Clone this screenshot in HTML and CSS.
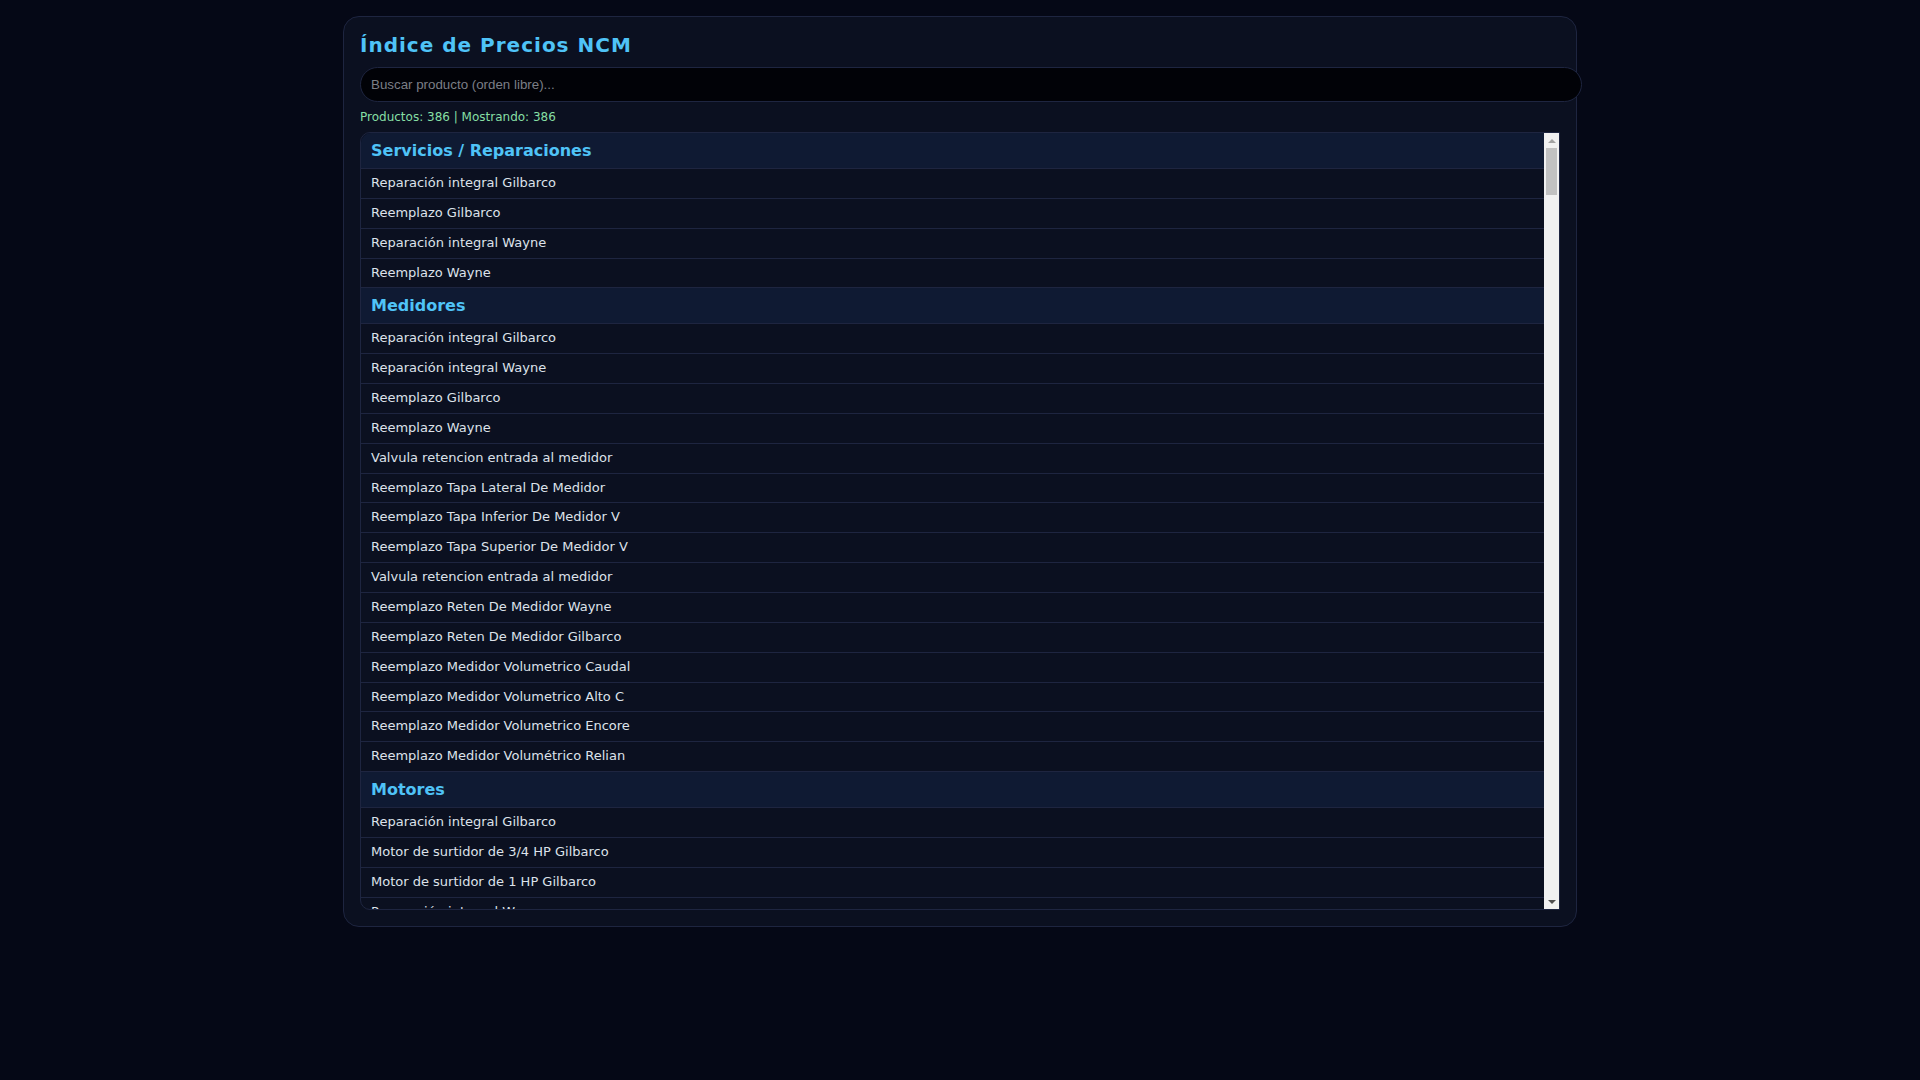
FILE: index.html
```html
<!DOCTYPE html>
<html>
<head>
    <meta charset="utf-8" />
    <meta name="viewport" content="width=device-width, initial-scale=1">
    <title>Índice de Precios NCM</title>
    <link rel="stylesheet" href="styles.css">
</head>
<body>
    <div class="panel">
        <h1>Índice de Precios NCM</h1>
        <input class="search" id="search" type="text" placeholder="Buscar producto (orden libre)..." />
        <div class="stats">Productos: <span id="total">386</span> | Mostrando: <span id="shown">386</span></div>
        <div class="list-box">
            <div class="list" id="list"></div>
            <div class="scrollbar">
                <span class="arrow up"></span>
                <div class="track" id="track"><div class="thumb" id="thumb"></div></div>
                <span class="arrow down"></span>
            </div>
        </div>
    </div>
    <script type="text/javascript">
        let data = [
            ['Servicios / Reparaciones', [
                'Reparación integral Gilbarco',
                'Reemplazo Gilbarco',
                'Reparación integral Wayne',
                'Reemplazo Wayne'
            ]],
            ['Medidores', [
                'Reparación integral Gilbarco',
                'Reparación integral Wayne',
                'Reemplazo Gilbarco',
                'Reemplazo Wayne',
                'Valvula retencion entrada al medidor',
                'Reemplazo Tapa Lateral De Medidor',
                'Reemplazo Tapa Inferior De Medidor V',
                'Reemplazo Tapa Superior De Medidor V',
                'Valvula retencion entrada al medidor',
                'Reemplazo Reten De Medidor Wayne',
                'Reemplazo Reten De Medidor Gilbarco',
                'Reemplazo Medidor Volumetrico Caudal',
                'Reemplazo Medidor Volumetrico Alto C',
                'Reemplazo Medidor Volumetrico Encore',
                'Reemplazo Medidor Volumétrico Relian'
            ]],
            ['Motores', [
                'Reparación integral Gilbarco',
                'Motor de surtidor de 3/4 HP Gilbarco',
                'Motor de surtidor de 1 HP Gilbarco',
                'Reparación integral Wayne',
                'Motor de surtidor de 3/4 HP Wayne',
                'Motor de surtidor de 1 HP Wayne'
            ]]
        ]

        // relleno del resto del catalogo
        let brands = ['Gilbarco', 'Wayne', 'Tokheim', 'Bennett']
        let extra = [
            ['Bombas', ['Reemplazo Bomba', 'Reparación Bomba', 'Reemplazo Sello Bomba', 'Reemplazo Bypass Bomba', 'Reemplazo Correa Bomba']],
            ['Mangueras', ['Manguera 3/4 x 4m', 'Manguera 1 x 4m', 'Manguera retorno vapor', 'Breakaway', 'Giratorio']],
            ['Picos', ['Pico automatico 3/4', 'Pico automatico 1', 'Pico alto caudal', 'Funda de pico', 'Reparación de pico']],
            ['Filtros', ['Filtro de linea', 'Filtro de succion', 'Reemplazo cartucho filtro', 'Filtro separador de agua']],
            ['Electrónica', ['Reemplazo CPU', 'Reemplazo fuente', 'Reemplazo pulser', 'Reemplazo display', 'Reemplazo teclado', 'Reemplazo placa I/O']],
            ['Válvulas', ['Valvula proporcional', 'Valvula solenoide', 'Valvula de retencion', 'Valvula de alivio']],
            ['Juntas y Sellos', ['Junta de medidor', 'O-ring de bomba', 'Sello mecanico', 'Kit de juntas']],
            ['Tanques', ['Sonda de nivel', 'Boca de descarga', 'Venteo', 'Detector de fugas']],
            ['Instalaciones', ['Cañeria 2 pulgadas', 'Cañeria 1 1/2 pulgadas', 'Camara de contencion', 'Sump de surtidor']]
        ]
        let kinds = ['', ' (repuestos)', ' (servicio)']
        let count = data.reduce((n, c) => n + c[1].length, 0)
        let round = 0
        while (count < 386) {
            extra.forEach(cat => {
                let items = []
                cat[1].forEach(name => brands.forEach(b => {
                    if (count < 386) { items.push(name + ' ' + b); count++ }
                }))
                if (items.length) data.push([cat[0] + kinds[round % 3], items])
            })
            round++
        }

        let listDom = document.querySelector('#list')
        let shownDom = document.querySelector('#shown')
        let trackDom = document.querySelector('#track')
        let thumbDom = document.querySelector('#thumb')
        document.querySelector('#total').innerHTML = count

        function render(query) {
            let words = query.toLowerCase().split(' ').filter(w => w)
            let shown = 0
            listDom.innerHTML = ''
            data.forEach(cat => {
                let items = cat[1].filter(name => words.every(w => name.toLowerCase().includes(w)))
                if (!items.length) return
                let catDom = listDom.appendChild(document.createElement('div'))
                catDom.setAttribute('class', 'cat')
                catDom.innerHTML = cat[0]
                items.forEach(name => {
                    let itemDom = listDom.appendChild(document.createElement('div'))
                    itemDom.setAttribute('class', 'item')
                    itemDom.innerHTML = name
                    shown++
                })
            })
            shownDom.innerHTML = shown
            listDom.scrollTop = 0
            updateThumb()
        }

        function updateThumb() {
            let trackH = trackDom.clientHeight
            let ratio = listDom.clientHeight / listDom.scrollHeight
            let thumbH = Math.max(20, Math.round(trackH * Math.min(1, ratio)))
            let maxScroll = listDom.scrollHeight - listDom.clientHeight
            let top = maxScroll > 0 ? (trackH - thumbH) * listDom.scrollTop / maxScroll : 0
            thumbDom.style.height = thumbH + 'px'
            thumbDom.style.marginTop = top + 'px'
        }

        listDom.addEventListener('scroll', updateThumb)
        document.querySelector('#search').addEventListener('input', e => render(e.target.value))
        render('')
    </script>
</body>
</html>
```

FILE: styles.css
```css
body {
    margin: 0;
    padding: 16px;
    background: #050816;
    color: #dde2ea;
    font-family: "DejaVu Sans", "Noto Sans", sans-serif;
}
.panel {
    max-width: 1200px;
    margin: 0 auto;
    padding: 16px;
    background: #0b1020;
    border: 1px solid #1e2540;
    border-radius: 16px;
}
h1 {margin: 0 0 10px;font-size: 20px;letter-spacing: 1px;color: #4fc3f7;}
.search {
    display: block;
    width: 100%;
    padding: 9px 10px;
    font: 13.333px "Liberation Sans", Arial, sans-serif;
    color: #dde2ea;
    background: #010207;
    border: 1px solid #1e2540;
    border-radius: 18px;
    outline: none;
}
.search::placeholder {color: #7b7e86;}
.stats {margin: 8px 0;font-size: 12px;line-height: 14px;color: #86dfa4;}

.list-box {
    display: flex;
    height: 776px;
    border: 1px solid #1e2540;
    border-radius: 10px 0 0 10px;
}
.list {
    flex: 1;
    overflow-y: auto;
    scrollbar-width: none;
    border-radius: 10px 0 0 10px;
}
.list::-webkit-scrollbar {display: none;}
.cat {
    padding: 8px 10px;
    font-size: 16px;
    font-weight: bold;
    color: #4fc3f7;
    background: #0f1a33;
    border-bottom: 1px solid #1e2540;
}
.item {padding: 7px 10px;font-size: 13px;line-height: 14.85px;border-bottom: 1px solid #1e2540;}

.scrollbar {width: 15px;display: flex;flex-direction: column;background: #f1f1f1;}
.track {flex: 1;}
.thumb {margin: 0 2px;background: #c1c1c1;}
.arrow {height: 15px;display: flex;align-items: center;justify-content: center;}
.arrow::before {content: '';width: 0;height: 0;border-left: 4px solid transparent;border-right: 4px solid transparent;}
.arrow.up::before {border-bottom: 4px solid #a3a3a3;}
.arrow.down::before {border-top: 4px solid #505050;}
```
